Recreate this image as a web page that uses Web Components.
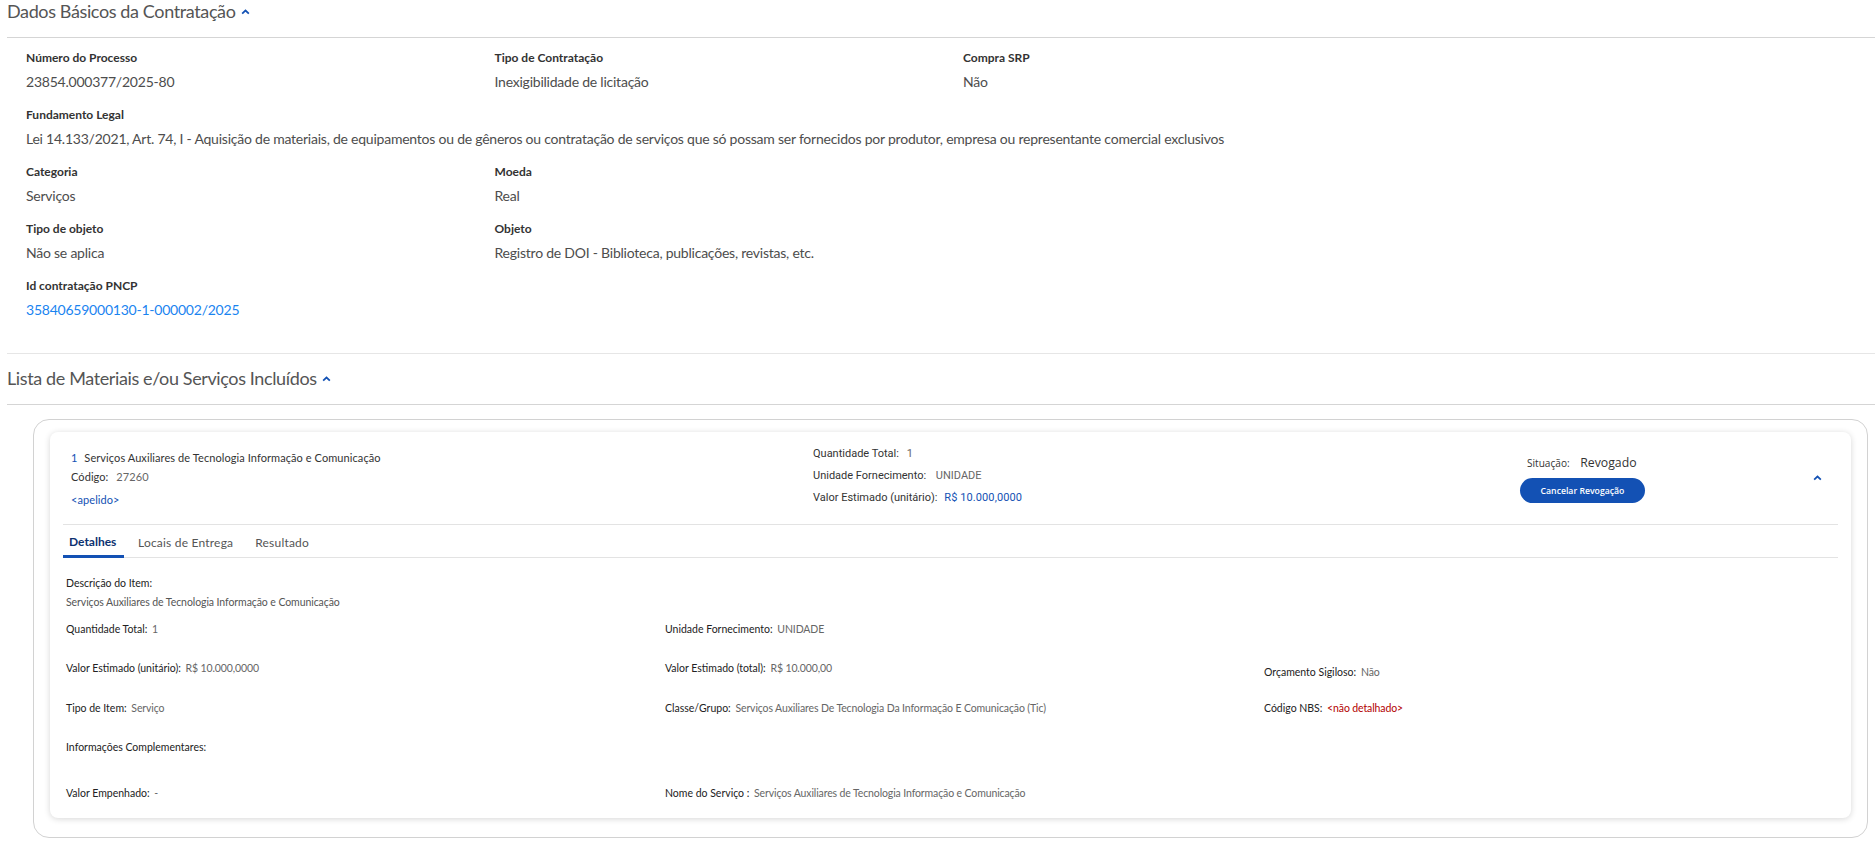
<!DOCTYPE html>
<html lang="pt-BR">
<head>
<meta charset="utf-8">
<title>Dados Básicos da Contratação</title>
<style>
html, body { margin: 0; padding: 0; background: #fff; }
body { font-family: "Lato", "Liberation Sans", sans-serif; color: #333; }
</style>
</head>
<body>
<contrato-page>
  <section-block titulo="Dados Básicos da Contratação" gap="12">
    <field-grid>
      <data-field label="Número do Processo">23854.000377/2025-80</data-field>
      <data-field label="Tipo de Contratação">Inexigibilidade de licitação</data-field>
      <data-field label="Compra SRP">Não</data-field>
      <data-field label="Fundamento Legal" class="full">Lei 14.133/2021, Art. 74, I - Aquisição de materiais, de equipamentos ou de gêneros ou contratação de serviços que só possam ser fornecidos por produtor, empresa ou representante comercial exclusivos</data-field>
      <data-field label="Categoria">Serviços</data-field>
      <data-field label="Moeda" class="wide">Real</data-field>
      <data-field label="Tipo de objeto">Não se aplica</data-field>
      <data-field label="Objeto" class="wide">Registro de DOI - Biblioteca, publicações, revistas, etc.</data-field>
      <data-field label="Id contratação PNCP" class="full" link>35840659000130-1-000002/2025</data-field>
    </field-grid>
  </section-block>
  <section-block titulo="Lista de Materiais e/ou Serviços Incluídos" gap="14" divided>
    <item-card>
      <item-header></item-header>
      <tab-bar></tab-bar>
      <item-details></item-details>
    </item-card>
  </section-block>
</contrato-page>

<script>
const CHEVRON = `<svg viewBox="0 0 10 7" width="9" height="6" aria-hidden="true"><path d="M5 0.4 L9.6 4.6 L8.2 6 L5 3.1 L1.8 6 L0.4 4.6 Z" fill="#1351b4"/></svg>`

customElements.define('contrato-page', class extends HTMLElement {
  constructor () {
    super()
    this.attachShadow({ mode: 'open' }).innerHTML = `
      <style>
        :host { display: block; padding: 0 0 15px 7px; }
      </style>
      <slot></slot>`
  }
})

customElements.define('section-block', class extends HTMLElement {
  constructor () {
    super()
    const gap = this.getAttribute('gap') || 12
    this.attachShadow({ mode: 'open' }).innerHTML = `
      <style>
        :host { display: block; }
        :host([divided]) { border-top: 1px solid #e6e6e6; }
        h2 {
          margin: 0;
          height: 37px;
          display: flex;
          align-items: flex-start;
          gap: 5px;
          font: 400 18px/22px "Lato", "Liberation Sans", sans-serif;
          letter-spacing: -0.38px;
          color: #555;
          border-bottom: 1px solid #d5d5d5;
        }
        svg { margin-top: 9px; }
        :host([divided]) h2 { height: 48px; padding-bottom: 2px; align-items: center; }
        :host([divided]) svg { margin-top: 2px; }
        .body { padding-top: ${gap}px; }
      </style>
      <h2><span>${this.getAttribute('titulo')}</span>${CHEVRON}</h2>
      <div class="body"><slot></slot></div>`
  }
})

customElements.define('field-grid', class extends HTMLElement {
  constructor () {
    super()
    this.attachShadow({ mode: 'open' }).innerHTML = `
      <style>
        :host {
          display: grid;
          grid-template-columns: 468.5px 468.5px 1fr;
          padding: 0 0 18px 19px;
        }
        ::slotted(.full) { grid-column: 1 / -1; }
        ::slotted(.wide) { grid-column: 2 / -1; }
      </style>
      <slot></slot>`
  }
})

customElements.define('data-field', class extends HTMLElement {
  constructor () {
    super()
    this.attachShadow({ mode: 'open' }).innerHTML = `
      <style>
        :host { display: block; height: 57px; }
        .l { font-weight: 700; font-size: 12px; line-height: 16px; color: #333; }
        .v { font-size: 14px; line-height: 20px; margin-top: 6px; color: #4d4d4d; letter-spacing: -0.23px; }
        :host([link]) .v { color: #1a84f0; }
      </style>
      <div class="l">${this.getAttribute('label')}</div>
      <div class="v"><slot></slot></div>`
  }
})

customElements.define('item-card', class extends HTMLElement {
  constructor () {
    super()
    this.attachShadow({ mode: 'open' }).innerHTML = `
      <style>
        :host {
          display: block;
          margin-left: 26px;
          width: 1835px;
          box-sizing: border-box;
          border: 1px solid #d2d2d2;
          border-radius: 16px;
          padding: 12px 16px 19px;
        }
        .inner {
          background: #fff;
          border-radius: 8px;
          box-shadow: 0 1px 6px rgba(0,0,0,.16);
          padding: 0 13px;
          height: 386px;
          box-sizing: border-box;
        }
      </style>
      <div class="inner"><slot></slot></div>`
  }
})

customElements.define('item-header', class extends HTMLElement {
  constructor () {
    super()
    this.attachShadow({ mode: 'open' }).innerHTML = `
      <style>
        :host {
          display: grid;
          grid-template-columns: 750px 707px 291px 1fr;
          height: 92px;
          border-bottom: 1px solid #e3e3e3;
          font: 400 11px/16px "Roboto", "Liberation Sans", sans-serif;
          color: #333;
        }
        .a { padding: 18px 0 0 8px; font-family: "Lato", sans-serif; letter-spacing: 0.08px; }
        .a div:nth-child(2) { margin-top: 3px; }
        .a div:nth-child(3) { margin-top: 7px; color: #1351b4; }
        .num { color: #1351b4; margin-right: 4px; }
        .m { color: #666; margin-left: 5px; }
        .b { padding: 11px 0 0 0; }
        .b div { height: 22px; line-height: 22px; }
        .c { padding: 20px 0 0 0; font-family: "Open Sans", sans-serif; display: flex; flex-direction: column; font-size: 10.1px; }
        .sit { padding-left: 7px; line-height: 22px; }
        .sit b { font-weight: 400; font-size: 12.25px; margin-left: 8px; color: #333; }
        button {
          margin-top: 4px;
          width: 125px; height: 25px;
          border: 0; border-radius: 13px;
          background: #1351b4; color: #fff;
          font: 600 8.7px "Open Sans", sans-serif;
          padding: 0;
        }
        .d { padding: 43px 0 0 2px; }
        .d svg { display: block; }
        .blue { color: #1351b4; margin-left: 4px; letter-spacing: 0.1px; }
      </style>
      <div class="a">
        <div><span class="num">1</span> Serviços Auxiliares de Tecnologia Informação e Comunicação</div>
        <div>Código: <span class="m">27260</span></div>
        <div>&lt;apelido&gt;</div>
      </div>
      <div class="b">
        <div>Quantidade Total: <span class="m">1</span></div>
        <div>Unidade Fornecimento: <span class="m" style="margin-left:7px">UNIDADE</span></div>
        <div>Valor Estimado (unitário): <span class="blue">R$ 10.000,0000</span></div>
      </div>
      <div class="c">
        <div class="sit">Situação: <b>Revogado</b></div>
        <button>Cancelar Revogação</button>
      </div>
      <div class="d">${CHEVRON}</div>`
  }
})

customElements.define('tab-bar', class extends HTMLElement {
  constructor () {
    super()
    this.attachShadow({ mode: 'open' }).innerHTML = `
      <style>
        :host {
          display: flex;
          height: 32px;
          border-bottom: 1px solid #e3e3e3;
          font: 400 12px "Lato", sans-serif;
          letter-spacing: 0.2px;
          color: #555;
        }
        div { padding: 2px 6px 0; margin-right: 10px; display: flex; align-items: center; height: 32px; box-sizing: border-box; }
        .on {
          font-weight: 700; letter-spacing: 0; color: #0c326f;
          border-bottom: 3px solid #1351b4;
          width: 61px; height: 33px; padding: 2px 0 0 6px; margin-right: 8px;
        }
      </style>
      <div class="on">Detalhes</div><div>Locais de Entrega</div><div>Resultado</div>`
  }
})

customElements.define('item-details', class extends HTMLElement {
  constructor () {
    super()
    this.attachShadow({ mode: 'open' }).innerHTML = `
      <style>
        :host {
          display: grid;
          grid-template-columns: 599px 599px 1fr;
          grid-template-rows: 46px 39px 40px 39px 46px auto;
          padding: 18px 0 0 3px;
          font: 400 10.5px/14px "Lato", sans-serif;
          color: #222;
        }
        .s { grid-column: 1 / -1; }
        .m { color: #666; margin-left: 2px; letter-spacing: -0.12px; }
        .r { color: #b30000; margin-left: 2px; letter-spacing: -0.12px; }
        .desc div + div { margin-top: 5px; color: #555; letter-spacing: -0.08px; }
        .low { padding-top: 4px; }
      </style>
      <div class="s desc"><div>Descrição do Item:</div><div>Serviços Auxiliares de Tecnologia Informação e Comunicação</div></div>
      <div>Quantidade Total: <span class="m">1</span></div>
      <div>Unidade Fornecimento: <span class="m">UNIDADE</span></div>
      <div></div>
      <div>Valor Estimado (unitário): <span class="m">R$ 10.000,0000</span></div>
      <div>Valor Estimado (total): <span class="m">R$ 10.000,00</span></div>
      <div class="low">Orçamento Sigiloso: <span class="m">Não</span></div>
      <div>Tipo de Item: <span class="m">Serviço</span></div>
      <div>Classe/Grupo: <span class="m">Serviços Auxiliares De Tecnologia Da Informação E Comunicação (Tic)</span></div>
      <div>Código NBS: <span class="r">&lt;não detalhado&gt;</span></div>
      <div class="s">Informações Complementares:</div>
      <div>Valor Empenhado: <span class="m">-</span></div>
      <div>Nome do Serviço : <span class="m">Serviços Auxiliares de Tecnologia Informação e Comunicação</span></div>`
  }
})
</script>
</body>
</html>
